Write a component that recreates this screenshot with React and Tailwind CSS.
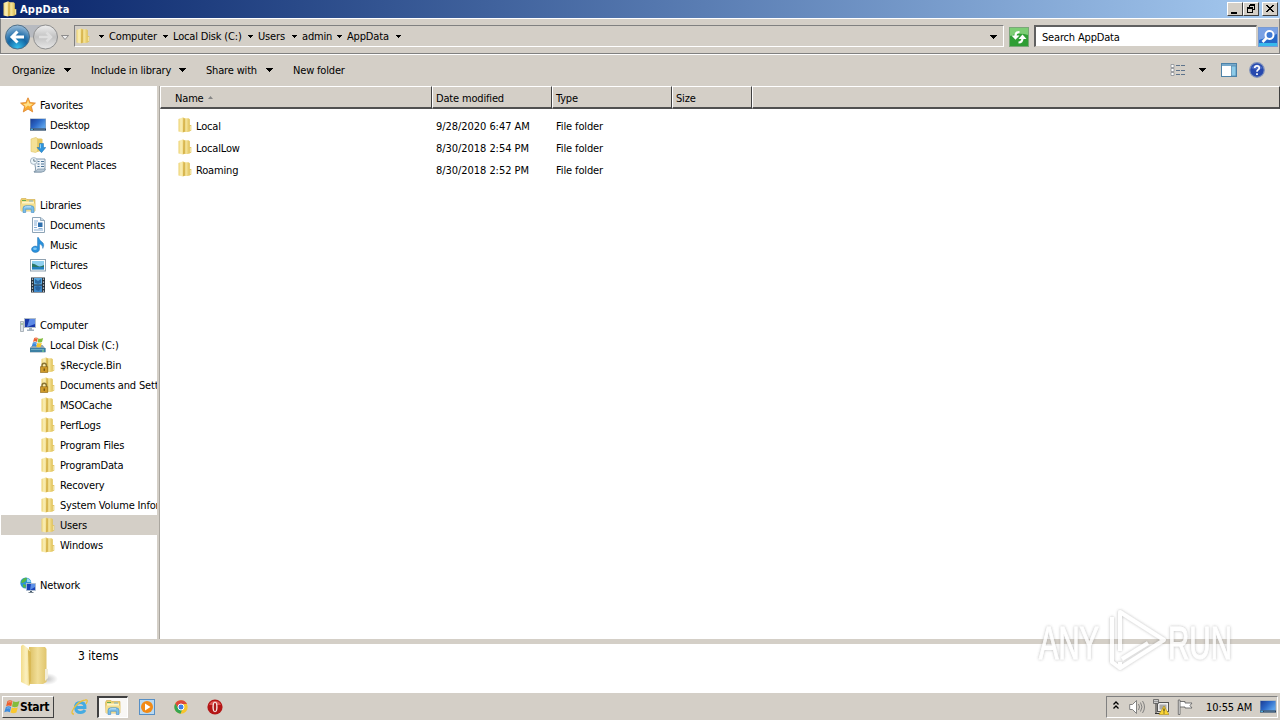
import React from "react";

function Folder({ lock, className = "w-4 h-4" }) {
  return (
    <svg viewBox="0 0 16 16" className={className + " shrink-0"}>
      <defs>
        <linearGradient id="folderLeft">
          <stop stopColor="#ecd06c" />
          <stop offset=".4" stopColor="#faefb8" />
          <stop offset="1" stopColor="#ecd274" />
        </linearGradient>
        <linearGradient id="folderRight">
          <stop stopColor="#cfab40" />
          <stop offset=".4" stopColor="#f6e59c" />
          <stop offset="1" stopColor="#dfc056" />
        </linearGradient>
      </defs>
      <path d="M7 1.200H11.500L12.800 2.200V14.200L11 15H6.500Z" fill="url(#folderRight)" />
      <path d="M1.500 2 6.200.3 7.600 1.500V14.300L5.800 15.600 1.500 14.500Z" fill="url(#folderLeft)" />
      <path d="M6.400 1 7.700 1.700V14.300L6.100 15.500Z" fill="#d3af44" />
      <path d="M12 8H14.300V13.500L12.300 14.500Z" fill="#e3c765" />
      <path d="M13.400 9v4" stroke="#f8ecb8" strokeWidth=".8" />
      {lock && (
        <g>
          <path d="M2 10.500V8.500a2.200 2.200 0 0 1 4.400 0v2" fill="none" stroke="#8a7433" strokeWidth="1.400" />
          <rect x=".5" y="9.800" width="7.300" height="5.700" fill="#cf9a2a" stroke="#8a6414" strokeWidth=".6" />
          <path d="M4.200 11.500v2.300" stroke="#503a08" />
        </g>
      )}
    </svg>
  );
}

function Monitor() {
  return (
    <>
      <defs>
        <linearGradient id="screen" x2="1" y2=".6">
          <stop stopColor="#1c3c92" />
          <stop offset=".5" stopColor="#2a66c6" />
          <stop offset="1" stopColor="#5ba0e8" />
        </linearGradient>
      </defs>
      <rect x="0" y="1.500" width="16" height="12" fill="#8ea3b8" />
      <rect x=".6" y="2" width="14.800" height="9.500" fill="url(#screen)" />
      <path d="M0 11.500H16V13.500H0Z" fill="#24405f" />
      <path d="M.5 11.800h2.500v1.200H.5z" fill="#4fa9d8" />
      <path d="M4 12.500h11" stroke="#5d7c9c" strokeWidth=".7" />
    </>
  );
}

function Explorer() {
  return (
    <>
      <path d="M.5 3.500 1.500 1.500H6L7 2.500H15V14H1Z" fill="#edcf6d" stroke="#cfa945" strokeWidth=".6" />
      <path d="M2 4.500H14V7H2Z" fill="#fdf5c9" />
      <path d="M2 3.500h4" stroke="#67ad4f" />
      <path d="M9 4h4" stroke="#5fa6dd" strokeWidth=".8" />
      <path d="M1 6.500H15.500L15 14H1Z" fill="#f4de8e" />
      <path d="M3 15.500V11.500Q3 8.700 6 8.700H11Q14 8.700 14 11.500V15.500H11.300V12.300H5.700V15.500Z" fill="#79bde9" stroke="#3f8cc5" strokeWidth=".6" />
      <path d="M4.500 10.700Q5 9.800 6.500 9.800H11" stroke="#cbe9fa" fill="none" />
    </>
  );
}

function WinFlag() {
  return (
    <>
      <path d="M3.500 2Q6 .5 8.500 2L7.300 7.200Q4.800 5.700 2.100 7.200Z" fill="#ec5f2e" />
      <path d="M9.200 2.300Q12 3.800 15.500 2L14 7.300Q11 8.900 8 7.500Z" fill="#83bc3c" />
      <path d="M1.900 8Q4.600 6.600 7.100 8L5.900 13.300Q3.300 11.800.3 13.300Z" fill="#3c8bdd" />
      <path d="M7.800 8.400Q10.800 9.900 13.800 8.200L12.400 13.500Q9.400 15.100 6.500 13.600Z" fill="#f9c72e" />
      <path d="M4 3.200Q6 2.200 7.600 3M2.700 9.200Q4.500 8.500 6.200 9.200" stroke="#fff" strokeOpacity=".4" fill="none" />
    </>
  );
}

function Glyph({ name }) {
  switch (name) {
    case "star":
      return (
        <>
          <path d="M8 .8 10.100 5.600 15.400 6.100 11.400 9.600 12.700 14.900 8 12 3.300 14.900 4.600 9.600.6 6.100 5.900 5.600Z" fill="#f9ab2f" stroke="#e08a35" strokeWidth=".9" />
          <path d="M8 3 9.300 6.400 13 7 9.500 9.500 8 8.500 5 11 5.500 9 3 7 6.800 6.600Z" fill="#ffe08c" />
        </>
      );
    case "desktop":
      return <Monitor />;
    case "downloads":
      return (
        <>
          <path d="M6 1.500H11.500L12.500 2.500V14L6 15Z" fill="#e6c860" />
          <path d="M1 2 6 .4 7.500 1.500V14.500L5.500 15.500 1 14.500Z" fill="#f4e197" stroke="#dfc267" strokeWidth=".6" />
          <path d="M9.500 6.500h4v4h2.300L11.500 15.700 7 10.500H9.500Z" fill="#2f95dc" stroke="#1d6eb0" strokeWidth=".5" />
          <path d="M10.500 7.300v4" stroke="#8fd0f5" />
        </>
      );
    case "recent":
      return (
        <>
          <path d="M4 2H15V11Q15 15 11 15H4Q6 14 5.500 11Z" fill="#edf3f8" stroke="#7890a4" strokeWidth=".9" />
          <path d="M7.500 4.500h2M11 4.500h3M7.500 7h2M11 7h3M7.500 9.500h2M11 9.500h3" stroke="#4c7396" />
          <path d="M4 14.500Q7 14.500 7.500 12H15.500Q15 15 12 15H4Z" fill="#b6c7d5" stroke="#7890a4" strokeWidth=".7" />
          <circle cx="3.800" cy="4" r="3.400" fill="#edf6fb" stroke="#9fb0be" strokeWidth=".9" />
          <path d="M3.800 1.900V4.200H5.800" fill="none" stroke="#47606f" strokeWidth=".8" />
        </>
      );
    case "libraries":
      return <Explorer />;
    case "documents":
      return (
        <>
          <path d="M2.500.5H10.500L14.500 3.500V15.500H2.500Z" fill="#fcfdff" stroke="#8ea4b6" />
          <path d="M10.500.5V3.500H14.500" fill="#c8d8e6" stroke="#7790a5" strokeWidth=".7" />
          <path d="M4 4h4M4 6h3M4 8h3M4 10.500h3M4 13h9M8.500 11.500h4" stroke="#7aa5cf" strokeWidth=".9" />
          <rect x="8" y="5.500" width="4.500" height="4.500" fill="#2f70ae" />
        </>
      );
    case "music":
      return (
        <>
          <path d="M8.500 .5Q9.500 3.500 12 5Q15 7 12.800 11.500Q13 8 9.500 7V12.200A4 3.200 0 1 1 7.500 9.500V.5Z" fill="#2a91dc" stroke="#1764a6" strokeWidth=".4" />
          <ellipse cx="5" cy="11.700" rx="1.900" ry="1.200" fill="#7cc7f5" />
        </>
      );
    case "pictures":
      return (
        <>
          <rect x=".5" y="2.500" width="15" height="11.500" fill="#fff" stroke="#8fa1b0" />
          <rect x="2" y="4" width="12" height="8.500" fill="#8fd0f0" />
          <path d="M2 6.500Q5 7 7.500 8.700T14 8V10.500H2Z" fill="#2b7865" />
          <path d="M2 10H14V12.500H2Z" fill="#2380bd" />
        </>
      );
    case "videos":
      return (
        <>
          <rect x="1" y=".5" width="14" height="15" fill="#26313b" />
          <rect x="4" y="1" width="8" height="6.500" fill="#58a7df" />
          <rect x="4" y="8.500" width="8" height="6.500" fill="#3c87c9" />
          <path d="M5 2 8 4 11 2V6L8 7 5 6ZM5 10 8 9 11 10.500 9 14 6 13Z" fill="#1f5690" opacity=".75" />
          <path d="M2.500 1.500v14M13.500 1.500v14" stroke="#dfe6eb" strokeWidth="1.200" strokeDasharray="1.300 1.700" />
        </>
      );
    case "computer":
      return (
        <>
          <path d="M.5 4.500H3.500V14.500H.5Z" fill="#dde3e8" stroke="#9aa4ac" strokeWidth=".8" />
          <path d="M1.200 7h1.600" stroke="#5b9a46" />
          <rect x="4.500" y="1.500" width="11" height="9" fill="#1838a8" stroke="#b1bdc9" />
          <path d="M9.500 2H15V7L7 10Z" fill="#5c8ae6" />
          <path d="M9 11h3v1.500h2V14H7v-1.500h2Z" fill="#a4b2bf" />
        </>
      );
    case "disk":
      return (
        <>
          <path d="M0 10.500 3 8H12.500L15.500 11.500V15.500H0Z" fill="#90a6b4" />
          <path d="M0 11H15.500V15H0Z" fill="#3c80a3" />
          <path d="M1 12.500h13" stroke="#78b8d0" strokeWidth=".8" />
          <path d="M12 14h2" stroke="#8de48a" />
          <g transform="translate(1.500 -.5) scale(.75)"><WinFlag /></g>
        </>
      );
    case "network":
      return (
        <>
          <circle cx="5.800" cy="6" r="5.500" fill="#2e93d4" />
          <path d="M2 3Q5 0 7 1L6 4 3 6 1 5.500ZM3 7l3 1-1 3-2-1Z" fill="#55b844" />
          <path d="M7 1.200Q10 2 11 5L7 5Z" fill="#9bd9f4" />
          <rect x="6.500" y="6.500" width="9" height="7" fill="#1842b8" stroke="#b5c3cf" strokeWidth=".8" />
          <path d="M11 7h4v3l-5 3Z" fill="#5d90e8" />
          <path d="M10 14h2v1h1.500v.8h-5V15H10Z" fill="#4b5d6d" />
        </>
      );
    default:
      return null;
  }
}

function Icon({ name, className = "w-4 h-4" }) {
  if (name === "folder") return <Folder />;
  if (name === "locked") return <Folder lock />;
  return (
    <svg viewBox="0 0 16 16" className={className + " shrink-0"}>
      <Glyph name={name} />
    </svg>
  );
}

function Down({ className = "" }) {
  return (
    <svg viewBox="0 0 7 4" className={"w-[7px] h-1 shrink-0 " + className} shapeRendering="crispEdges">
      <path d="M0 0H7L3.500 4Z" fill="#000" />
    </svg>
  );
}

function SmallDown() {
  return (
    <svg viewBox="0 0 5 3" className="w-[5px] h-[3px] shrink-0" shapeRendering="crispEdges">
      <path d="M0 0H5L2.500 3Z" fill="#000" />
    </svg>
  );
}

const tree = [
  [20, "star", "Favorites"],
  [30, "desktop", "Desktop"],
  [30, "downloads", "Downloads"],
  [30, "recent", "Recent Places"],
  null,
  [20, "libraries", "Libraries"],
  [30, "documents", "Documents"],
  [30, "music", "Music"],
  [30, "pictures", "Pictures"],
  [30, "videos", "Videos"],
  null,
  [20, "computer", "Computer"],
  [30, "disk", "Local Disk (C:)"],
  [40, "locked", "$Recycle.Bin"],
  [40, "locked", "Documents and Settings"],
  [40, "folder", "MSOCache"],
  [40, "folder", "PerfLogs"],
  [40, "folder", "Program Files"],
  [40, "folder", "ProgramData"],
  [40, "folder", "Recovery"],
  [40, "folder", "System Volume Information"],
  [40, "folder", "Users"],
  [40, "folder", "Windows"],
  null,
  [20, "network", "Network"],
];
const indent = { 20: "pl-[19px]", 30: "pl-[29px]", 40: "pl-[39px]" };

const crumbs = [
  ["Computer", "w-16"],
  ["Local Disk (C:)", "w-[85px]"],
  ["Users", "w-11"],
  ["admin", "w-[45px]"],
  ["AppData", "w-[59px]"],
];

const files = [
  ["Local", "9/28/2020 6:47 AM"],
  ["LocalLow", "8/30/2018 2:54 PM"],
  ["Roaming", "8/30/2018 2:52 PM"],
];

function WindowButton({ children }) {
  return (
    <div className="w-4 h-[14px] bg-[#d4cfc7] border border-t-white border-l-white border-r-[#404040] border-b-[#404040]">
      <svg viewBox="0 0 14 12" className="w-[14px] h-3" fill="none" stroke="#000" shapeRendering="crispEdges">{children}</svg>
    </div>
  );
}

function TitleBar() {
  return (
    <div className="h-[18px] flex items-center bg-linear-to-r from-[#0a246a] to-[#a6caf0] pl-[2px] pr-[2px]">
      <Folder />
      <div className="ml-[2px] pt-px text-white font-bold tracking-[0.2px]">AppData</div>
      <div className="ml-auto flex">
        <WindowButton><path d="M3 9H9M3 10H9" /></WindowButton>
        <WindowButton>
          <path d="M5.500 1.500H10.500V6.500H8.500M5.500 1.500V4M5 2.500H11M3.500 4.500H8.500V9.500H3.500ZM3 5.500H9" />
        </WindowButton>
        <div className="w-[3px]" />
        <WindowButton><path d="M3 2 10 9M4 2 11 9M10 2 3 9M11 2 4 9" /></WindowButton>
      </div>
    </div>
  );
}

function AddressBar() {
  return (
    <div className="h-9 flex items-center border-t border-l border-r border-b border-t-white border-l-[#808080] border-r-[#808080] border-b-[#808080] pl-1">
      <svg viewBox="0 0 66 28" className="w-[66px] h-7 mt-px shrink-0">
        <defs>
          <radialGradient id="back" cx=".5" cy=".95" r=".95">
            <stop offset="0" stopColor="#35c0ee" />
            <stop offset=".45" stopColor="#1467a4" />
            <stop offset=".6" stopColor="#2f78b0" />
            <stop offset="1" stopColor="#9fc0dc" />
          </radialGradient>
          <linearGradient id="fwd" x2="0" y2="1">
            <stop stopColor="#efefef" />
            <stop offset=".5" stopColor="#c2c2c2" />
            <stop offset="1" stopColor="#e8e8e8" />
          </linearGradient>
        </defs>
        <path d="M12 2H42V11Q28 18 12 11Z" fill="#b7bac0" />
        <circle cx="12.500" cy="14" r="12" fill="url(#back)" stroke="#4e6f88" />
        <path d="M19 14H8M12.500 8.500 7 14 12.500 19.500" fill="none" stroke="#fff" strokeWidth="3" />
        <circle cx="40.500" cy="14" r="12" fill="url(#fwd)" stroke="#8f8f8f" />
        <path d="M34 14H46M41.500 9.500 46 14 41.500 18.500" fill="none" stroke="#dedede" strokeWidth="2.500" />
        <path d="M56.500 12.500H63.500L60 16.500Z" fill="#eee" stroke="#777" strokeWidth=".8" />
      </svg>
      <div className="ml-[3px] w-[930px] h-[22px] flex items-center border border-t-[#808080] border-l-[#808080] border-r-white border-b-white">
        <Folder className="w-4 h-[18px] -mt-px" />
        <div className="ml-2 mt-px flex items-center">
          <SmallDown />
          {crumbs.map(([label, width]) => (
            <div key={label} className={"flex items-center justify-between pl-[5px] " + width}>
              <span className="whitespace-nowrap">{label}</span>
              <SmallDown />
            </div>
          ))}
        </div>
        <Down className="ml-auto mt-px mr-[6px]" />
      </div>
      <svg viewBox="0 0 20 20" className="ml-[5px] mt-px w-5 h-5 shrink-0">
        <rect x=".5" y=".5" width="19" height="19" fill="#2f9e35" stroke="#7aa779" />
        <path d="M1 1H19V8Q10 5 1 9Z" fill="#7dce75" />
        <path d="M10.500 5Q6.500 5 6.500 9M9.500 15.500Q13.500 15.500 13.500 11" fill="none" stroke="#fff" strokeWidth="2.200" />
        <path d="M2.500 8.500H10.500L6.500 12.800ZM9.500 12H17.500L13.500 7.500Z" fill="#fff" />
      </svg>
      <div className="ml-[5px] mr-px grow h-[22px] flex items-center bg-white border-t-2 border-l-2 border-t-[#606060] border-l-[#606060] border-r border-b border-r-[#d4cfc7] border-b-[#d4cfc7] pl-[6px]"><span className="pt-[2px]">Search AppData</span></div>
      <svg viewBox="0 0 20 20" className="mt-px mr-px w-5 h-5 shrink-0">
        <rect x=".5" y=".5" width="19" height="19" fill="#2468c8" stroke="#7a9bd2" />
        <path d="M1 1H19V7L1 13Z" fill="#79a1e4" />
        <path d="M1 16H19V19H1Z" fill="#38b9ec" />
        <circle cx="11.500" cy="8" r="4" fill="#3d79d4" stroke="#fff" strokeWidth="2" />
        <path d="M8.500 11 4.500 15" stroke="#fff" strokeWidth="2.500" />
      </svg>
    </div>
  );
}

function Toolbar() {
  return (
    <div className="h-8 flex items-center border-t border-white pl-3 pb-px">
      <span className="pt-[2px] w-[52px]">Organize</span><Down />
      <span className="pt-[2px] ml-5 w-[88px] whitespace-nowrap">Include in library</span><Down />
      <span className="pt-[2px] ml-5 w-[60px] whitespace-nowrap">Share with</span><Down />
      <span className="pt-[2px] ml-5">New folder</span>
      <svg viewBox="0 0 16 14" className="ml-auto w-4 h-[14px]">
        <path d="M1 1.500H4V4.500H1ZM1 5.500H4V8.500H1ZM1 9.500H4V12.500H1Z" fill="#fff" stroke="#8a8f96" strokeWidth=".8" />
        <path d="M6 2.500h4M11 2.500h4M6 7.500h4M11 7.500h4M6 11.500h4M11 11.500h4" stroke="#5d738b" />
      </svg>
      <Down className="ml-[13px]" />
      <svg viewBox="0 0 16 14" className="ml-[15px] w-4 h-[14px]">
        <rect x=".5" y=".5" width="15" height="13" fill="#fff" stroke="#4c82a8" />
        <path d="M1 2H15" stroke="#76a9cb" strokeWidth="2" />
        <rect x="10.500" y="3" width="4.500" height="10" fill="#8ccbe9" stroke="#4c82a8" strokeWidth=".7" />
      </svg>
      <svg viewBox="0 0 16 16" className="ml-3 mr-[15px] w-4 h-4">
        <circle cx="8" cy="8" r="7.300" fill="#2648ae" stroke="#8093bd" strokeWidth="1.200" />
        <path d="M2 6Q8-1 14 6Q8 9 2 6Z" fill="#6584d0" opacity=".6" />
        <path d="M5.700 6Q5.800 3.800 8 3.800T10.300 6Q10.300 7.100 8.900 7.900Q8 8.500 8 9.800M8 11.300V13" fill="none" stroke="#fff" strokeWidth="1.700" />
      </svg>
    </div>
  );
}

function Head({ children, className }) {
  return (
    <div className={"h-[23px] flex items-center bg-[#d4cfc7] border-t border-l border-t-white border-l-white border-r border-r-[#404040] border-b-2 border-b-[#505050] pt-[3px] " + className}>
      {children}
    </div>
  );
}

function Watermark() {
  return (
    <svg
      viewBox="0 0 200 70"
      className="absolute left-[1036px] top-[605px] w-[200px] h-[70px] tracking-normal"
      fontFamily="Liberation Sans Narrow, Liberation Sans, sans-serif"
      fontSize="46"
      strokeLinejoin="round"
    >
      <defs>
        <filter id="glow" x="-10%" y="-10%" width="120%" height="120%">
          <feDropShadow dx="0" dy="0" stdDeviation="1.500" floodColor="#777" floodOpacity=".6" />
        </filter>
      </defs>
      <g filter="url(#glow)" opacity=".85" fill="#fff" stroke="#fff" strokeWidth="1">
        <text x="3" y="54" textLength="60" lengthAdjust="spacingAndGlyphs">ANY</text>
        <text x="132" y="54" textLength="64" lengthAdjust="spacingAndGlyphs">RUN</text>
        <path d="M84 46V7L128 35 84 63V57M86 54 112 38M76 12V57L84 63" fill="none" strokeWidth="4" />
      </g>
    </svg>
  );
}

function Taskbar() {
  return (
    <div className="h-7 bg-[#d4cfc7] flex items-center border-t border-white pl-[2px] pr-[2px]">
      <div className="w-[52px] h-[22px] flex items-center border border-t-white border-l-white border-r-[#404040] border-b-[#404040] pl-px">
        <svg viewBox="0 0 16 16" className="w-4 h-4 shrink-0"><WinFlag /></svg>
        <span className="text-[12px] font-bold tracking-[-0.3px]">Start</span>
      </div>
      <svg viewBox="0 0 18 18" className="ml-[17px] w-[18px] h-[18px]">
        <path d="M4.500 9.500H14Q14 4.500 9.300 4.500T4.500 9.500Q5 14.500 9.500 14.500Q12.500 14.500 14 12" fill="none" stroke="#45abe2" strokeWidth="2.900" />
        <path d="M3 16Q-1 16 3 10Q8 3 14 2Q18 1 15 6" fill="none" stroke="#eac03b" strokeWidth="1.300" />
      </svg>
      <div className="ml-[8px] w-[31px] h-[22px] bg-[#f8f7f5] border-t-2 border-l-2 border-r border-b border-t-[#404040] border-l-[#404040] border-r-white border-b-white flex items-center justify-center">
        <Icon name="libraries" />
      </div>
      <svg viewBox="0 0 16 16" className="ml-[11px] w-4 h-4">
        <rect x=".5" y=".5" width="15" height="15" fill="#b9d9f1" stroke="#568fc5" />
        <circle cx="8" cy="8" r="6" fill="#f28a15" />
        <path d="M6 4.500V11.500L11.500 8Z" fill="#fff" />
      </svg>
      <svg viewBox="0 0 16 16" className="ml-[18px] w-4 h-4">
        <circle cx="8" cy="8" r="6.700" fill="#f7c52e" />
        <path d="M2.300 4.500A6.700 6.700 0 0 1 14 5H8L5 9.500Z" fill="#dd483b" />
        <path d="M2.300 4.500 6 10.500 9 11 7.500 14.700A6.700 6.700 0 0 1 2.300 4.500Z" fill="#35a553" />
        <circle cx="8" cy="8" r="3" fill="#3f7fe6" stroke="#fff" />
      </svg>
      <svg viewBox="0 0 16 16" className="ml-[18px] w-4 h-4">
        <circle cx="8" cy="8" r="7.600" fill="#b41616" />
        <path d="M2 6A6.500 6.500 0 0 1 14 6Z" fill="#dd5553" />
        <ellipse cx="8" cy="8" rx="2.600" ry="5.200" fill="#f5e4e1" />
        <ellipse cx="8" cy="8" rx="1.200" ry="4.200" fill="#ad1a1a" />
      </svg>
      <div className="ml-auto w-[172px] h-[22px] flex items-center border border-t-[#808080] border-l-[#808080] border-r-white border-b-white pl-[6px]">
        <svg viewBox="0 0 6 8" className="w-[6px] h-2 mb-1" fill="none" stroke="#000" strokeWidth="1.300"><path d="M.5 3.500 3 1 5.500 3.500M.5 7.500 3 5 5.500 7.500" /></svg>
        <svg viewBox="0 0 16 16" className="ml-[10px] w-4 h-4" fill="none" stroke="#777" strokeWidth=".9">
          <path d="M.7 5.500H3.500L7.500 1.500V14.500L3.500 10.500H.7Z" fill="#fff" />
          <path d="M9.500 5Q11.500 8 9.500 11M11.500 3.500Q14.500 8 11.500 12.500M13.500 2Q17.500 8 13.500 14" />
        </svg>
        <svg viewBox="0 0 16 16" className="ml-2 w-4 h-4">
          <rect x="4.500" y="3.500" width="11" height="9" fill="#eee" stroke="#555" />
          <rect x="6.500" y="5.500" width="7" height="5" fill="#aaa" />
          <path d="M.5.500H5.500V4.500H.5Z" fill="#fff" stroke="#555" strokeWidth=".8" />
          <path d="M3 4.500V14.500M2 14.500H8M2 1.500v2M4 1.500v2" fill="none" stroke="#333" />
          <path d="M11 7 16 15.500H6Z" fill="#fbd533" stroke="#ad8b12" strokeWidth=".6" />
          <path d="M11 9.500v3M11 13.500v1" stroke="#222" />
        </svg>
        <svg viewBox="0 0 16 16" className="ml-2 w-4 h-4" strokeWidth=".9">
          <path d="M2.500 2.500H8V4H15L13 6.500 15 9H8V8H2.500Z" fill="#fff" stroke="#666" />
          <path d="M1.300 1V15.500H3V1Z" fill="#fff" stroke="#666" />
        </svg>
        <span className="ml-[13px] pt-[2px] w-[54px] whitespace-nowrap tracking-[-0.1px]">10:55 AM</span>
        <Icon name="desktop" />
      </div>
    </div>
  );
}

export default function App() {
  return (
    <div className="relative w-[1280px] h-[720px] overflow-hidden flex flex-col bg-[#d4cfc7] text-black text-[11px] leading-[14px] tracking-[-0.17px] font-['DejaVu_Sans_Condensed','DejaVu_Sans',sans-serif] [font-stretch:condensed]">
      <TitleBar />
      <AddressBar />
      <Toolbar />
      <div className="h-[553px] flex">
        <div className="w-[157px] bg-white pt-[9px] pl-px overflow-hidden">
          {tree.map((row, i) =>
            row ? (
              <div key={i} className={"h-5 flex items-center " + indent[row[0]] + (row[2] === "Users" ? " bg-[#d4cfc7]" : "")}>
                <Icon name={row[1]} />
                <span className="ml-1 pt-[2px] whitespace-nowrap">{row[2]}</span>
              </div>
            ) : (
              <div key={i} className="h-5" />
            )
          )}
        </div>
        <div className="w-[3px] border-r border-[#aaa69f]" />
        <div className="grow bg-white">
          <div className="flex">
            <Head className="w-[272px] pl-[14px]">
              Name
              <svg viewBox="0 0 5 3" className="ml-[4px] mb-[3px] w-[5px] h-[3px]"><path d="M0 3H5L2.500 0Z" fill="#858585" /></svg>
            </Head>
            <Head className="w-[120px] pl-[3px]">Date modified</Head>
            <Head className="w-[120px] pl-[3px]">Type</Head>
            <Head className="w-20 pl-[3px]">Size</Head>
            <Head className="grow" />
          </div>
          <div className="pt-[6px]">
            {files.map(([name, date]) => (
              <div key={name} className="h-[22px] flex items-center pl-[17px]">
                <div className="pb-[2px]"><Icon name="folder" /></div>
                <span className="ml-[3px] pt-[2px] w-60">{name}</span>
                <span className="w-[120px] pt-[2px] whitespace-nowrap tracking-[-0.05px]">{date}</span>
                <span className="pt-[2px] tracking-[-0.12px]">File folder</span>
              </div>
            ))}
          </div>
        </div>
      </div>
      <div className="h-[5px]" />
      <div className="h-[48px] bg-white flex">
        <svg viewBox="0 0 40 44" className="ml-[19px] w-10 h-[44px]">
          <defs>
            <radialGradient id="shade">
              <stop stopColor="#888" stopOpacity=".5" />
              <stop offset="1" stopColor="#888" stopOpacity="0" />
            </radialGradient>
            <linearGradient id="bigFront">
              <stop stopColor="#f3dd8b" />
              <stop offset=".5" stopColor="#fbf0bf" />
              <stop offset="1" stopColor="#f0da88" />
            </linearGradient>
            <linearGradient id="bigBack">
              <stop stopColor="#dcbf62" />
              <stop offset=".5" stopColor="#f1de98" />
              <stop offset="1" stopColor="#e0c56d" />
            </linearGradient>
          </defs>
          <ellipse cx="28" cy="35" rx="11" ry="6" fill="url(#shade)" />
          <path d="M10 3H26L27.500 5V38L24 40H10Z" fill="url(#bigBack)" />
          <path d="M2 2 4 .5 11 6 12 36 10 42 2 38Z" fill="url(#bigFront)" />
          <path d="M9 6 12 8 12 37 10 42Z" fill="#d9b956" />
          <path d="M26 25H29V34L26 37Z" fill="#f2edda" />
        </svg>
        <span className="ml-[19px] mt-[5px] text-[12px] tracking-[0px]">3 items</span>
      </div>
      <Taskbar />
      <Watermark />
    </div>
  );
}
